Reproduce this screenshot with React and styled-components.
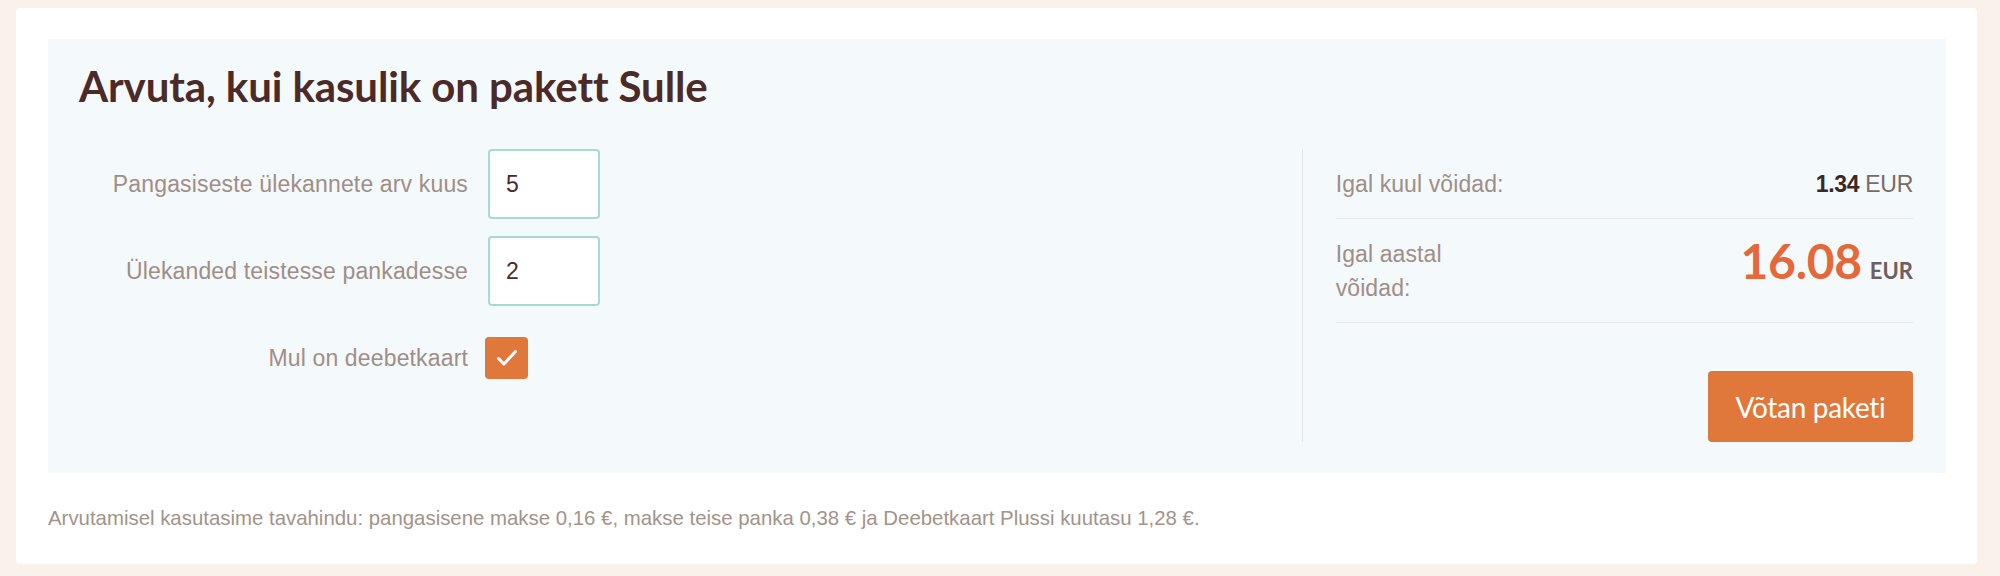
import React from "react";
import styled, { createGlobalStyle } from "styled-components";

const Global = createGlobalStyle`
  html, body { margin: 0; padding: 0; background: #fbf1eb; }
  body { font-family: "Liberation Sans", Arial, sans-serif; }
  * { box-sizing: border-box; }
`;

const Page = styled.div`
  padding: 8px 23px 13px 16px;
  background: #fbf1eb;
`;

const Card = styled.section`
  background: #ffffff;
  border-radius: 4px;
  padding: 31px 31px 0 32px;
`;

const Panel = styled.div`
  background: #f4f9fc;
  padding: 24px 33px 31px 31px;
`;

const Title = styled.h2`
  margin: 0 0 40px 0;
  font-family: Lato, "Open Sans", sans-serif;
  font-weight: 700;
  font-size: 42px;
  line-height: 46px;
  color: #4b2a27;
  letter-spacing: -0.1px;
`;

const Columns = styled.div`
  display: grid;
  grid-template-columns: 2fr 1fr;
  align-items: start;
`;

const Form = styled.div`
  display: grid;
  grid-template-columns: 389px auto;
  column-gap: 20px;
  row-gap: 17px;
  align-items: center;
  justify-content: start;
`;

const Label = styled.label`
  text-align: right;
  font-size: 23px;
  letter-spacing: 0.15px;
  line-height: 70px;
  color: #a08e86;
`;

const NumberInput = styled.input`
  width: 112px;
  height: 70px;
  border: 2px solid #a7dbd0;
  border-radius: 4px;
  background: #ffffff;
  padding: 0 0 0 16px;
  font-family: "Liberation Sans", Arial, sans-serif;
  font-size: 23px;
  color: #4b2a27;
  outline: none;
`;

const CheckBox = styled.span`
  width: 43px;
  height: 42px;
  margin-left: -3px;
  border-radius: 4px;
  background: #e0783b;
  display: flex;
  align-items: center;
  justify-content: center;
`;

const Results = styled.div`
  border-left: 1px solid #e3e5e6;
  padding-left: 33px;
  display: flex;
  flex-direction: column;
`;

const ResultRow = styled.div`
  display: flex;
  justify-content: space-between;
  align-items: ${(p) => (p.$top ? "flex-start" : "center")};
  padding: 18px 0 17px;
  border-bottom: 1px solid #e6e8e9;
`;

const ResultLabel = styled.span`
  width: 175px;
  font-size: 23px;
  letter-spacing: 0.1px;
  line-height: 34px;
  color: #a08e86;
`;

const SmallValue = styled.span`
  font-size: 23px;
  line-height: 34px;
  color: #7a6a66;
  letter-spacing: -0.3px;
`;

const Strong = styled.b`
  color: #3d2828;
  font-weight: 700;
`;

const BigValue = styled.span`
  margin-top: 1px;
  display: flex;
  align-items: baseline;
  gap: 8px;
  font-family: Lato, "Open Sans", sans-serif;
  font-weight: 700;
  line-height: 46px;
`;

const BigNumber = styled.span`
  font-size: 48px;
  color: #e5683a;
  letter-spacing: -0.3px;
`;

const Currency = styled.span`
  font-size: 22px;
  color: #6f6060;
`;

const Actions = styled.div`
  display: flex;
  justify-content: flex-end;
  padding-top: 48px;
`;

const Button = styled.button`
  width: 205px;
  height: 71px;
  border: none;
  border-radius: 4px;
  background: #e0783b;
  color: #ffffff;
  font-family: Lato, "Open Sans", sans-serif;
  font-size: 28px;
  letter-spacing: -0.3px;
  cursor: pointer;
`;

const Note = styled.p`
  margin: 0;
  padding: 34px 0 35px;
  font-size: 20.4px;
  line-height: 22px;
  color: #a39389;
`;

function Check() {
  return (
    <svg width="22" height="18" viewBox="0 0 22 18" fill="none">
      <path d="M2.5 9.5 L8 15 L19.5 2.5" stroke="#ffffff" strokeWidth="3" strokeLinecap="round" strokeLinejoin="round" />
    </svg>
  );
}

export default function App() {
  return (
    <>
      <Global />
      <Page>
        <Card>
          <Panel>
            <Title>Arvuta, kui kasulik on pakett Sulle</Title>
            <Columns>
              <Form>
                <Label htmlFor="f1">Pangasiseste ülekannete arv kuus</Label>
                <NumberInput id="f1" defaultValue="5" />
                <Label htmlFor="f2">Ülekanded teistesse pankadesse</Label>
                <NumberInput id="f2" defaultValue="2" />
                <Label>Mul on deebetkaart</Label>
                <CheckBox role="checkbox" aria-checked="true">
                  <Check />
                </CheckBox>
              </Form>
              <Results>
                <ResultRow>
                  <ResultLabel>Igal kuul võidad:</ResultLabel>
                  <SmallValue>
                    <Strong>1.34</Strong> EUR
                  </SmallValue>
                </ResultRow>
                <ResultRow $top>
                  <ResultLabel>Igal aastal võidad:</ResultLabel>
                  <BigValue>
                    <BigNumber>16.08</BigNumber>
                    <Currency>EUR</Currency>
                  </BigValue>
                </ResultRow>
                <Actions>
                  <Button>Võtan paketi</Button>
                </Actions>
              </Results>
            </Columns>
          </Panel>
          <Note>
            Arvutamisel kasutasime tavahindu: pangasisene makse 0,16 €, makse teise panka 0,38 € ja Deebetkaart Plussi kuutasu 1,28 €.
          </Note>
        </Card>
      </Page>
    </>
  );
}
